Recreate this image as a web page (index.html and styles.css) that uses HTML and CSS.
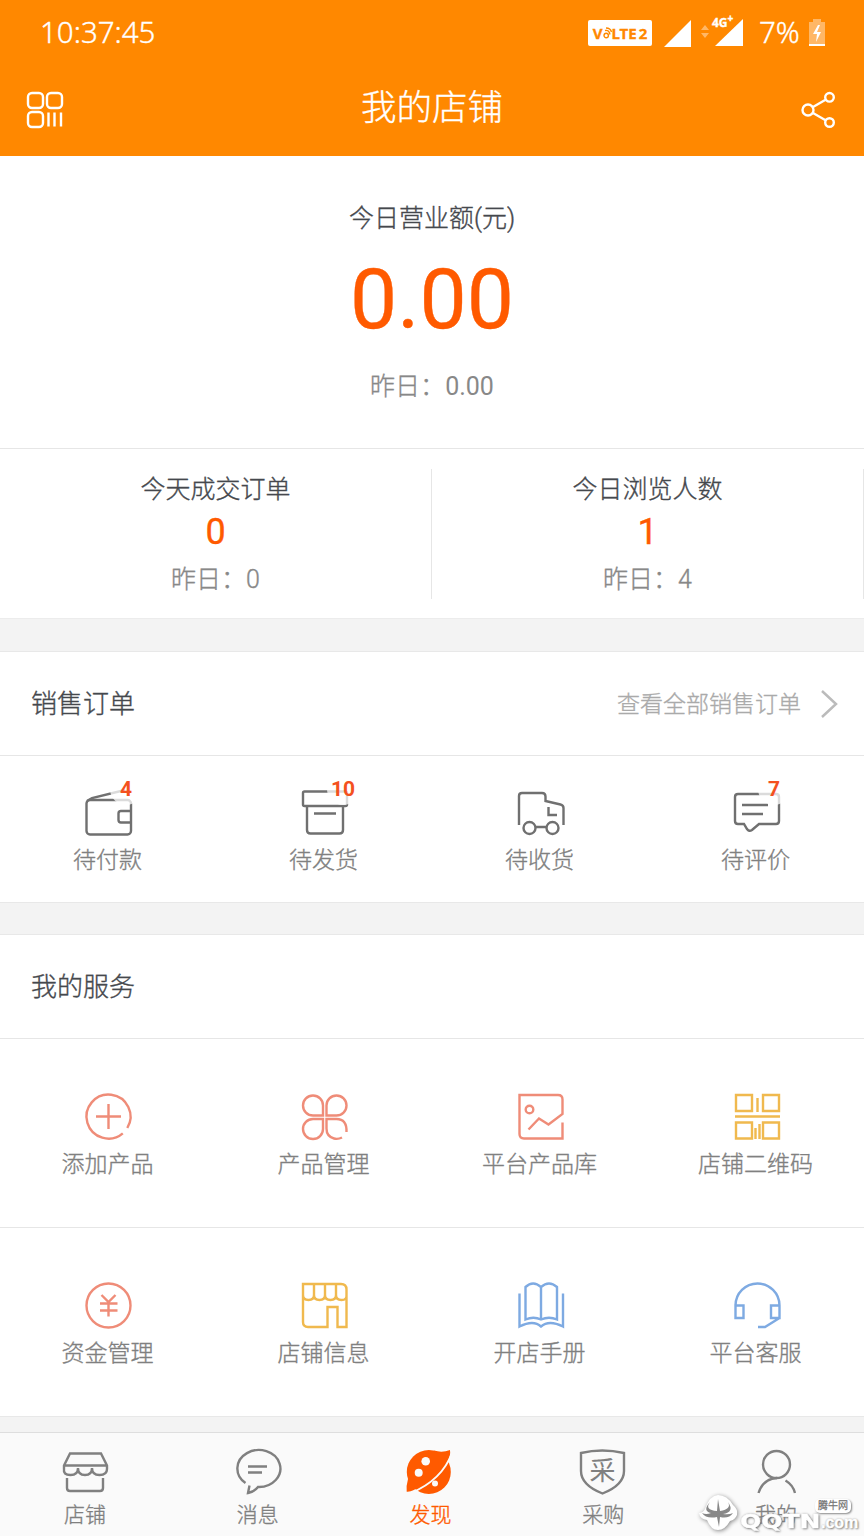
FILE: index.html
```html
<!DOCTYPE html>
<html lang="zh-CN">
<head>
  <meta charset="UTF-8">
  <title>我的店铺</title>
  <link rel="stylesheet" href="styles.css">
</head>
<body>
<div class="header">
  <div class="status">
    <span class="time">10:37:45</span>
    <span class="volte">V<svg width="9" height="12" viewBox="0 0 9 12"><circle cx="3.2" cy="8.5" r="2.2"/><path d="M2 3.5q4-1 5 4M3 1q4.500 0 5.500 4"/></svg>LTE<i>2</i></span>
    <svg class="signal" width="27" height="27" viewBox="0 0 27 27"><path d="M27 0v27H0z"/></svg>
    <div class="net">
      <svg width="42" height="30" viewBox="0 0 42 30"><path class="dim" d="M0 12l4-5 4 5zM0 15l4 5 4-5z"/><path d="M42 1v27H14z"/></svg>
      <b>4G<sup>+</sup></b>
    </div>
    <span class="power">7%</span>
    <svg class="battery" width="16" height="28" viewBox="0 0 16 28"><path class="dim" d="M4 0h8v3h4v22H0V3h4z"/><path d="M9 6L4 15h4l-1 8 5-10H8l3-7zM0 25h16v2H0z"/></svg>
  </div>
  <div class="nav">
    <svg class="line" width="38" height="38" viewBox="0 0 38 38"><rect x="2" y="2" width="15" height="15" rx="4"/><rect x="21" y="2" width="15" height="15" rx="4"/><rect x="2" y="21" width="15" height="15" rx="4"/><path d="M22.500 21.500v14M28.500 21.500v14M35 21.500v14"/></svg>
    <h1>我的店铺</h1>
    <svg class="line" width="38" height="38" viewBox="0 0 38 38"><circle cx="8" cy="19" r="5.500"/><circle cx="29.500" cy="6.300" r="4.300"/><circle cx="29.500" cy="31.500" r="4.300"/><path d="M13 16l13-7.500M13 22l13 7.500"/></svg>
  </div>
</div>

<div class="today">
  <p class="name">今日营业额(元)</p>
  <p class="money">0.00</p>
  <p class="yes">昨日：<span>0.00</span></p>
</div>
<div class="count">
  <div>
    <p class="name">今天成交订单</p>
    <p class="num">0</p>
    <p class="yes">昨日：0</p>
  </div>
  <div>
    <p class="name">今日浏览人数</p>
    <p class="num">1</p>
    <p class="yes">昨日：4</p>
  </div>
</div>

<div class="block">
  <div class="title">
    <h2>销售订单</h2>
    <a><span>查看全部销售订单</span><svg width="18" height="30" viewBox="0 0 18 30"><path d="M2 2l14 13L2 28"/></svg></a>
  </div>
  <ul class="order">
    <li>
      <div class="icon">
        <svg width="48" height="48" viewBox="0 0 48 48"><rect x="2.500" y="12" width="44.500" height="34.500" rx="3.500"/><path d="M3 13l5-3 33-8M47 23H37q-2.500 0-2.500 2.500v6.500q0 2.500 2.500 2.500h10"/></svg>
        <b>4</b>
      </div>
      <p>待付款</p>
    </li>
    <li>
      <div class="icon">
        <svg width="48" height="48" viewBox="0 0 48 48"><rect x="3" y="3.500" width="44" height="14.500" rx="1.500"/><path d="M7 18v24q0 3.500 3.500 3.500h29q3.500 0 3.500-3.500V18M14 25.500h22"/></svg>
        <b class="two">10</b>
      </div>
      <p>待发货</p>
    </li>
    <li>
      <div class="icon">
        <svg width="48" height="48" viewBox="0 0 48 48"><path d="M3 37V8q0-3 3-3h20q3.500 0 3.500 3.500V13l15 3.500q3 .7 3 3.500v17M32.500 19v8H41M20 39h10"/><circle cx="13.500" cy="40" r="6"/><circle cx="36.500" cy="40" r="6"/></svg>
      </div>
      <p>待收货</p>
    </li>
    <li>
      <div class="icon">
        <svg width="48" height="48" viewBox="0 0 48 48"><path d="M6 6h38q3 0 3 3v24q0 3-3 3H27l-7 6q-3 2-5-1l-3-5H6q-3 0-3-3V9q0-3 3-3zM10 17h26M10 26h21"/></svg>
        <b>7</b>
      </div>
      <p>待评价</p>
    </li>
  </ul>
</div>

<div class="block">
  <div class="title"><h2>我的服务</h2></div>
  <ul class="service">
    <li>
      <svg class="red" width="48" height="48" viewBox="0 0 48 48"><path d="M38.800 41.300A22 22 0 1 1 43.300 36M24.500 12v25M12 24.500h25"/></svg>
      <p>添加产品</p>
    </li>
    <li>
      <svg class="red" width="48" height="48" viewBox="0 0 48 48"><path d="M23 23.500H13A10 10 0 1 1 23 13.500zM26.500 23.500V13.500a10 10 0 1 1 10 10zM23 27v10a10 10 0 1 1-10-10zM42 45.500q-4 2-8 1-7.500-2-7.500-10V27h10q10.500 0 10 13"/></svg>
      <p>产品管理</p>
    </li>
    <li>
      <svg class="red" width="48" height="48" viewBox="0 0 48 48"><path d="M46.500 30.500V46.500H8q-4.500 0-4.500-4.500V3H42q4.500 0 4.500 4.500V22L32.500 32.500 23 26.500 12.500 37.500"/><circle cx="13.500" cy="17.500" r="3.800"/></svg>
      <p>平台产品库</p>
    </li>
    <li>
      <svg class="yellow" width="48" height="48" viewBox="0 0 48 48"><path d="M4 3h16v16H4zM31 3h16v16H31zM4 30.500h16v16H4zM31 30.500h16v16H31zM25.500 6v14M3 24.500h45M23.500 36v11M27.500 32v15"/></svg>
      <p>店铺二维码</p>
    </li>
  </ul>
  <ul class="service">
    <li>
      <svg class="red" width="48" height="48" viewBox="0 0 48 48"><circle cx="24.500" cy="24.500" r="22"/><path d="M17.500 14l7 7 7-7M16 22.500h17.500M16 29.500h17.500M24.500 21v14.500"/></svg>
      <p>资金管理</p>
    </li>
    <li>
      <svg class="yellow" width="48" height="48" viewBox="0 0 48 48"><path d="M3 3h38q5.500 0 5.500 5.500V46H37.500V26H27.500V46H8q-5 0-5-5zM3 14q0 5 5.500 5T14 14V3M14 14q0 5 5.500 5T25 14V3M25 14q0 5 5.500 5T36 14V3M36 14q0 5 5.500 5t5-5"/></svg>
      <p>店铺信息</p>
    </li>
    <li>
      <svg class="blue" width="48" height="48" viewBox="0 0 48 48"><path d="M25 6Q17-1 9.500 6v32.500q8-3.500 15.500 0 8-3.500 16 0V6Q33-1 25 6v32.500M3.500 12.500v33q14-7 21.500 0 8-7 22 0v-33"/></svg>
      <p>开店手册</p>
    </li>
    <li>
      <svg class="blue" width="48" height="48" viewBox="0 0 48 48"><path d="M3.500 24.500a22 22 0 0 1 44 0V37H39V24.500h8.500M3.500 24.500H11.500V37h-8zM47.500 37L33 46h-7"/></svg>
      <p>平台客服</p>
    </li>
  </ul>
</div>

<ul class="tab">
  <li>
    <svg width="48" height="48" viewBox="0 0 48 48"><path d="M9 5.500h31l6 12v3.500q0 6-7.500 6T31 20q0 7-7 7t-7-7q0 7-7.500 7T3 21v-3.500zM3 17.500h43M6 30v10q0 3 3 3h30q3 0 3-3V30"/></svg>
    <p>店铺</p>
  </li>
  <li>
    <svg width="48" height="48" viewBox="0 0 48 48"><path d="M11.500 35A21.500 18.500 0 1 1 24 39q-4 5-10 6l1.500-7.500M14 18.500h19M14 24.500h14"/></svg>
    <p>消息</p>
  </li>
  <li class="current">
    <svg width="48" height="48" viewBox="0 0 48 48"><circle cx="22.800" cy="24" r="22"/><path d="M28 2.500q8 2.500 16-.5 1 6-3 12L8 42q-4 2-7.300 1.700Q0 38 2 31z"/><path class="cut" d="M46 5Q36 32 5 45"/><circle class="hole" cx="19.700" cy="13.300" r="4.300"/><circle class="hole" cx="12.700" cy="24.700" r="4"/><circle class="hole" cx="29" cy="35.500" r="3"/></svg>
    <p>发现</p>
  </li>
  <li>
    <svg width="48" height="48" viewBox="0 0 48 48"><path d="M2 5q21-5 43 0v18q0 14-21.500 22.500Q2 37 2 23z"/><text x="23.500" y="31.500">采</text></svg>
    <p>采购</p>
  </li>
  <li>
    <svg width="48" height="48" viewBox="0 0 48 48"><circle cx="24.500" cy="16.500" r="13.500"/><path d="M6.500 45Q11 31 25 30M33.500 32.500Q41 37 43 45"/></svg>
    <p>我的</p>
  </li>
</ul>

<div class="mark">
  <svg width="42" height="38" viewBox="0 0 42 38"><path d="M20 1q9 0 15 10 5 4 4 10-2 5-7 6-5 9-12 9T9 26Q2 25 1 19q4 0 6-4Q12 1 20 1z"/><path class="cow" d="M12 8q-6 8 7 9l1-12 2 12q12-2 8-9 7 10-5 12 6 1 10-1-4 6-13 4l-1 10-2-10Q8 25 4 19q4 2 9 0Q4 17 12 8z"/></svg>
  <b>QQTN</b>
  <span>.com</span>
  <em>腾牛网</em>
</div>
</body>
</html>
```

FILE: styles.css
```css
body, ul, li, p, h1, h2 {
  margin: 0;
  padding: 0;
  list-style: none;
  font-weight: 300;
}

body {
  width: 864px;
  height: 1536px;
  overflow: hidden;
  position: relative;
  display: flex;
  flex-direction: column;
  background: #f3f3f3;
  color: #45484d;
  font-family: Roboto, "Noto Sans CJK SC", sans-serif;
  -webkit-text-stroke: 0.35px;
}

svg {
  display: block;
  flex: none;
  fill: none;
  overflow: visible;
}

/* 顶部 */
.header {
  height: 156px;
  background: #ff8800;
  color: #fff;
}

.status {
  height: 66px;
  padding: 0 39px 0 40px;
  display: flex;
  align-items: center;
  font-family: "Noto Sans", sans-serif;
  font-size: 29.5px;
}

.status svg {
  fill: #fff;
}

.status .dim {
  opacity: 0.4;
}

.time {
  flex: 1;
  margin-top: -3px;
}

.volte {
  width: 64px;
  height: 26px;
  margin-right: 1px;
  display: flex;
  align-items: center;
  justify-content: center;
  background: #fff;
  border-radius: 2px;
  color: #ff8800;
  font-size: 15px;
  font-weight: bold;
}

.volte svg {
  fill: none;
  stroke: #ff8800;
  stroke-width: 1.4;
}

.volte i {
  margin-left: 2px;
  font-style: normal;
}

.signal {
  margin-left: 11px;
}

.net {
  margin-left: 10px;
  position: relative;
}

.net b {
  position: absolute;
  left: 11px;
  top: -2px;
  font-size: 12px;
  font-weight: 700;
  line-height: 14px;
}

.net sup {
  font-size: 10px;
  line-height: 0;
}

.power {
  width: 41px;
  margin: -3px 9px 0 16px;
  white-space: nowrap;
}

.nav {
  height: 88px;
  padding: 0 26px;
  display: flex;
  align-items: center;
  justify-content: space-between;
}

.nav h1 {
  font-size: 35.5px;
  line-height: 52px;
  margin-bottom: 5px;
}

.line {
  stroke: #fff;
  stroke-width: 2.4;
}

/* 今日数据 */
.today {
  height: 293px;
  background: #fff;
  border-bottom: 1px solid #e6e6e6;
  text-align: center;
  font-size: 25px;
}

.today .name {
  padding-top: 45px;
  line-height: 36px;
}

.money {
  color: #ff5a00;
  font-size: 84px;
  font-weight: 400;
  line-height: 100px;
  padding-top: 13px;
}

.today .yes {
  line-height: 36px;
  padding-top: 19px;
}

.yes {
  color: #888;
}

.yes span {
  font-weight: 400;
  -webkit-text-stroke: 0;
}

.count {
  height: 169px;
  margin-bottom: 1px;
  background: #fff;
  border-bottom: 1px solid #ececec;
  display: flex;
  align-items: center;
}

.count div {
  flex: 1;
  height: 130px;
  border-right: 1px solid #e6e6e6;
  text-align: center;
  font-size: 25px;
}

.count .name {
  line-height: 38px;
  padding-top: 2px;
}

.num {
  color: #ff5a00;
  font-size: 36px;
  font-weight: 400;
  line-height: 46px;
}

.count .yes {
  line-height: 36px;
  padding-top: 7px;
}

/* 订单和服务 */
.block {
  margin-top: 31px;
  border-top: 1px solid #e8e8e8;
  border-bottom: 1px solid #e8e8e8;
  background: #fff;
}

.title {
  height: 103px;
  padding: 0 26px 0 31px;
  display: flex;
  align-items: center;
  justify-content: space-between;
}

.title h2 {
  font-size: 26px;
  padding-bottom: 4px;
}

.title a {
  display: flex;
  align-items: center;
  color: #aaa;
  font-size: 23px;
  font-weight: 300;
}

.title span {
  padding-bottom: 3px;
}

.title svg {
  margin-left: 19px;
  stroke: #bbb;
  stroke-width: 2.5;
}

.order, .service {
  display: grid;
  grid-template-columns: repeat(4, 1fr);
  border-top: 1px solid #e6e6e6;
  color: #808080;
  text-align: center;
  font-size: 23px;
  line-height: 34px;
}

.order {
  height: 146px;
}

.order p, .service p {
  margin-right: 1px;
}

.order svg, .service svg {
  margin: 0 auto;
  stroke-width: 2.4;
}

.order .icon {
  width: 48px;
  margin: 32px auto 8px;
  position: relative;
}

.order svg {
  stroke: #707070;
}

.icon b {
  width: 32px;
  height: 32px;
  position: absolute;
  left: 26px;
  top: -15px;
  border-radius: 50%;
  background: rgba(255, 255, 255, 0.75);
  color: #f4511e;
  font-size: 21px;
  font-weight: bold;
  line-height: 33px;
  -webkit-text-stroke: 0;
}

.icon .two {
  left: 27px;
}

.service {
  height: 188px;
}

.service svg {
  margin-top: 53px;
  margin-bottom: 8px;
}

.red {
  stroke: #ef8c78;
}

.yellow {
  stroke: #f0b94e;
}

.blue {
  stroke: #7eaae2;
}

/* 底部导航 */
.tab {
  height: 103px;
  margin-top: 15px;
  border-top: 1px solid #dedede;
  background: #fafafa;
  display: flex;
  color: #808080;
  font-size: 21px;
  line-height: 30px;
  text-align: center;
}

.tab li {
  flex: 1;
  padding-top: 15px;
  padding-right: 3px;
}

.tab svg {
  margin: 0 auto 4px;
  stroke: #808080;
  stroke-width: 2.4;
}

.tab text {
  fill: #808080;
  stroke: none;
  font-size: 26px;
  font-weight: 400;
  text-anchor: middle;
}

.tab .current {
  color: #ff5a00;
}

.current svg {
  fill: #ff5a00;
  stroke: none;
}

.current .cut {
  fill: none;
  stroke: #fafafa;
  stroke-width: 2;
}

.current .hole {
  fill: #fafafa;
}

/* 水印 */
.mark {
  width: 166px;
  height: 42px;
  position: absolute;
  right: 0;
  bottom: 0;
  color: #fff;
  text-shadow: 1px 1px 2px #777, 0 0 2px #999;
}

.mark svg {
  fill: #fff;
  filter: drop-shadow(1px 1px 2px #888);
}

.mark .cow {
  fill: #888;
}

.mark b {
  position: absolute;
  left: 42px;
  top: 15px;
  font: bold 20px/24px "DejaVu Sans", sans-serif;
  transform: scaleX(1.25);
  transform-origin: left;
}

.mark span {
  position: absolute;
  left: 123px;
  top: 17px;
  font: bold 16px/24px "Liberation Sans", sans-serif;
}

.mark em {
  position: absolute;
  left: 117px;
  top: 5px;
  padding: 0 3px;
  border-radius: 5px;
  background: #fff;
  box-shadow: 1px 1px 2px #888;
  color: #777;
  font-size: 10px;
  font-style: normal;
  line-height: 14px;
  text-shadow: none;
}
```
